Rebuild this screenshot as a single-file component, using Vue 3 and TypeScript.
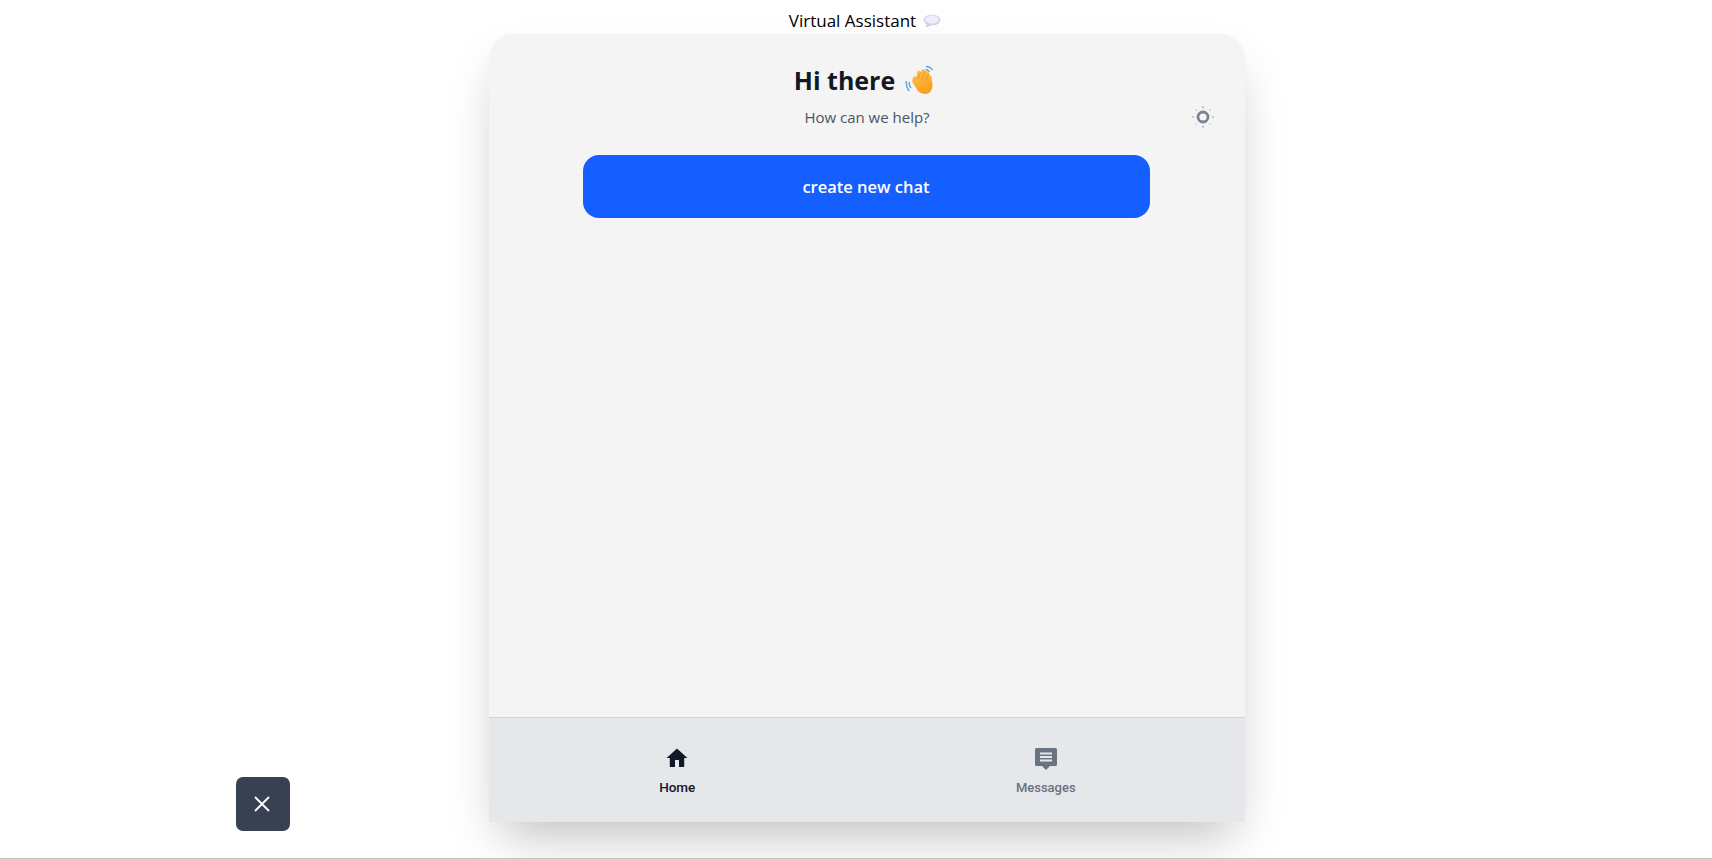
<script setup lang="ts">
import { ref } from 'vue'

const tabs = [
  { id: 'home', label: 'Home' },
  { id: 'messages', label: 'Messages' },
]
const activeTab = ref('home')
const sunRays = [0, 45, 90, 135, 180, 225, 270, 315]
</script>

<template>
  <div class="page">
    <div class="title">
      <span>Virtual Assistant</span>
      <svg class="bubble" viewBox="0 0 18 14" width="18" height="14">
        <path d="M4 9.500 L3.200 13.500 L8.500 10.800 Z" fill="#cdc1e4" />
        <ellipse cx="9" cy="6" rx="8.500" ry="5.600" fill="#dcd2ee" />
        <ellipse cx="9" cy="5.500" rx="6.800" ry="4" fill="#f1edf9" />
      </svg>
    </div>

    <div class="card">
      <div class="content">
        <div class="head">
          <h1>
            Hi there
            <svg class="wave" viewBox="0 0 30 30" width="30" height="30">
              <defs>
                <linearGradient id="hand" x1="0" y1="0" x2="0.4" y2="1">
                  <stop offset="0" stop-color="#fdc64a" />
                  <stop offset="1" stop-color="#f8a022" />
                </linearGradient>
              </defs>
              <path d="M4.500 17 Q3.500 20 6 23 M1.500 16 Q0.500 21 4 26" fill="none" stroke="#5f9fd6" stroke-width="1.400" />
              <path d="M21 1.500 Q25 1.500 27.500 5 M20.500 4.500 Q23 4.500 24.500 7" fill="none" stroke="#5f9fd6" stroke-width="1.400" />
              <path
                d="M8.500 12 Q10 10.500 11.500 12 L12 7 Q13 5 15 6 L15.500 7 L17 4.500 Q19 3.500 20 5.500 L21 6.500 Q23 5.500 24 7.500 L24 10 Q26.500 10 26.500 12.500 L27.500 19 Q28 26 23 28.500 Q17 30.500 13 26 L7.500 17.500 Q6.800 13.500 8.500 12 Z"
                fill="url(#hand)"
              />
              <path d="M13 14 L15.500 7.500 M16.500 15 L20 6.500 M20 16 L24 9" stroke="#e8922a" stroke-width="0.900" fill="none" />
            </svg>
          </h1>
          <div class="sub-row">
            <p>How can we help?</p>
            <svg class="theme" viewBox="0 0 24 24" width="24" height="24">
              <circle cx="12" cy="12" r="5" fill="none" stroke="#7b8494" stroke-width="2.800" />
              <line
                v-for="(a, i) in sunRays"
                :key="a"
                x1="12"
                y1="1.500"
                x2="12"
                y2="3"
                stroke="#7b8494"
                stroke-width="1.200"
                :opacity="i % 2 ? 0.5 : 1"
                :transform="`rotate(${a} 12 12)`"
              />
            </svg>
          </div>
        </div>
        <button class="new-chat">create new chat</button>
      </div>

      <nav class="tabs">
        <div
          v-for="tab in tabs"
          :key="tab.id"
          class="tab"
          :class="{ active: activeTab === tab.id }"
          @click="activeTab = tab.id"
        >
          <svg v-if="tab.id === 'home'" viewBox="0 0 24 24" width="24" height="24">
            <path d="M10 21v-7h4v7h5.200v-9H22.400L12 2.500 1.600 12h3.200v9z" fill="currentColor" />
          </svg>
          <svg v-else viewBox="0 0 24 24" width="24" height="24">
            <path
              d="M2.500 2h19A1.500 1.500 0 0 1 23 3.500v15a1.500 1.500 0 0 1-1.500 1.500H16l-4 4-4-4H2.500A1.500 1.500 0 0 1 1 18.500v-15A1.500 1.500 0 0 1 2.500 2z"
              fill="currentColor"
            />
            <path d="M6 6.500h12v2H6zM6 10h12v2H6zM6 13.500h12v2H6z" fill="#e5e7eb" />
          </svg>
          <span>{{ tab.label }}</span>
        </div>
      </nav>
    </div>

    <button class="close" aria-label="close">
      <svg viewBox="0 0 24 24" width="24" height="24">
        <path d="M5 5 L19 19 M19 5 L5 19" stroke="#fff" stroke-width="1.800" fill="none" />
      </svg>
    </button>
  </div>
</template>

<style scoped>
.page {
  position: relative;
  display: flex;
  flex-direction: column;
  align-items: center;
  box-sizing: border-box;
  height: 859px;
  padding-left: 22px;
  border-bottom: 1px solid #c4c4c4;
  font-family: "Open Sans", "Noto Sans", sans-serif;
  overflow: hidden;
}
.title {
  display: flex;
  align-items: center;
  gap: 7px;
  height: 34px;
  padding-top: 7px;
  padding-right: 4px;
  box-sizing: border-box;
  font-size: 17px;
  line-height: 27px;
  color: #000;
}
.bubble {
  margin-top: 1px;
}
.card {
  display: flex;
  flex-direction: column;
  width: 756px;
  height: 788px;
  border-radius: 24px 24px 0 0;
  background: #f4f4f4;
  box-shadow: 0 25px 50px -12px rgba(0, 0, 0, 0.25);
}
.content {
  flex: 1;
  display: flex;
  flex-direction: column;
  align-items: center;
}
.head {
  width: 100%;
  text-align: center;
}
h1 {
  display: flex;
  justify-content: center;
  align-items: center;
  gap: 10px;
  margin: 0;
  padding-top: 24px;
  padding-right: 5px;
  height: 43px;
  font-size: 25px;
  font-weight: 700;
  color: #111827;
}
.sub-row {
  position: relative;
  height: 30px;
  margin-top: 1px;
}
.sub-row p {
  margin: 0;
  font-size: 15px;
  line-height: 30px;
  color: #4b5563;
}
.theme {
  position: absolute;
  top: 3px;
  right: 30px;
}
.new-chat {
  width: 567px;
  height: 63px;
  margin-top: 23px;
  margin-right: 2px;
  border: none;
  border-radius: 16px;
  background: #155eff;
  color: #fff;
  font-family: inherit;
  font-size: 16.5px;
  font-weight: 600;
}
.tabs {
  display: flex;
  height: 105px;
  padding: 0 15px 0 4px;
  box-sizing: border-box;
  border-top: 1px solid #d1d5db;
  background: #e5e7eb;
}
.tab {
  flex: 1;
  display: flex;
  flex-direction: column;
  align-items: center;
  padding-top: 28px;
  font-family: "Roboto", sans-serif;
  font-size: 13px;
  line-height: 20px;
  font-weight: 500;
  color: #6b7280;
}
.tab svg {
  margin-bottom: 8px;
}
.tab.active svg {
  margin-bottom: 7px;
}
.tab.active {
  font-size: 13.5px;
  color: #111827;
}
.close {
  position: absolute;
  left: 236px;
  top: 777px;
  display: flex;
  align-items: center;
  justify-content: center;
  width: 54px;
  height: 54px;
  padding: 0 2px 0 0;
  border: none;
  border-radius: 7px;
  background: #374151;
}
</style>

<style>
body {
  background: #fff;
}
</style>
